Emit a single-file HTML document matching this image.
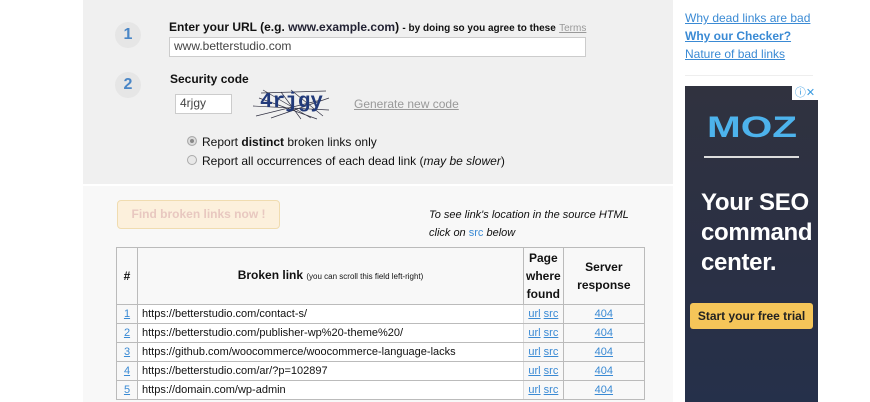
<!DOCTYPE html>
<html style="width:870px;height:402px;overflow:hidden"><head><meta charset="utf-8"><style>
*{box-sizing:border-box;margin:0;padding:0}
body{width:870px;height:402px;overflow:hidden;background:#fff;font-family:"Liberation Sans",Arial,sans-serif;position:relative;color:#111}
.top{position:absolute;left:83px;top:0;width:590px;height:184px;background:#f0f0f0}
.bot{position:absolute;left:83px;top:186px;width:590px;height:216px;background:#f8f8f8}
.circ{position:absolute;width:26px;height:26px;border-radius:50%;background:#e6e6e6;color:#4a86c6;font-size:16px;text-align:center;line-height:26px;font-weight:bold}
.abs{position:absolute;white-space:nowrap}
a{color:#3a8ad4;text-decoration:underline}
.inp{position:absolute;background:#fff;border:1px solid #ccc;font-size:12px;color:#444;padding-left:4px;line-height:17px}
.radio{position:absolute;width:10px;height:10px;border-radius:50%;border:1px solid #aaa;background:#e8e8e8}
table{position:absolute;left:116px;top:247px;width:529px;border-collapse:collapse;background:#f8f8f8;font-size:11px}
td,th{border:1px solid #bbb;height:19px;padding:0 2px}
th{font-weight:bold;font-size:12px;line-height:18px}
td.n{text-align:center}
td.l{background:#fff;padding-left:4px;border-right:1px solid #ddd}
td.c{text-align:center}
.ad{position:absolute;left:685px;top:86px;width:133px;height:316px;background:linear-gradient(#30323f,#2a3045 60%,#25304a);overflow:hidden}
</style></head><body>
<div class="top"></div><div class="bot"></div>
<div class="circ" style="left:115px;top:22px">1</div>
<div class="circ" style="left:115px;top:72px">2</div>
<div class="abs" style="left:169px;top:20px;font-size:12px;font-weight:bold">Enter your URL (e.g. <span style="color:#223">www.example.com</span>) <span style="font-size:10px">- by doing so you agree to these</span> <a style="font-size:10px;font-weight:normal;color:#999">Terms</a></div>
<div class="inp" style="left:169px;top:37px;width:417px;height:20px">www.betterstudio.com</div>
<div class="abs" style="left:170px;top:72px;font-size:12px;font-weight:bold">Security code</div>
<div class="inp" style="left:175px;top:94px;width:57px;height:20px">4rjgy</div>
<div class="abs" style="left:251px;top:88px;width:80px;height:33px;color:#223a7a;font-size:21px;font-weight:bold;font-family:'Liberation Mono',monospace;overflow:hidden">
<svg width="80" height="33" style="position:absolute;left:0;top:0" stroke="#334" stroke-width="0.7"><path d="M10 5L75 3M5 28L70 12M12 2L60 30M20 30L78 10M30 4L50 31M2 18L78 22M40 2L72 28M8 10L66 31"/></svg><span style="position:relative;left:9px;top:3px">4rjgy</span></div>
<a class="abs" style="left:354px;top:97px;font-size:12px;color:#999">Generate new code</a>
<div class="radio" style="left:187px;top:136px;background:#888;box-shadow:inset 0 0 0 2px #ddd"></div>
<div class="abs" style="left:202px;top:135px;font-size:12px">Report <b>distinct</b> broken links only</div>
<div class="radio" style="left:187px;top:155px"></div>
<div class="abs" style="left:202px;top:154px;font-size:12px">Report all occurrences of each dead link (<i>may be slower</i>)</div>
<div class="abs" style="left:117px;top:200px;width:163px;height:29px;border:1px solid #f0dcb0;background:#fcf0dc;border-radius:4px;color:#e8c8c0;font-weight:bold;font-size:12px;text-align:center;line-height:27px">Find broken links now !</div>
<div class="abs" style="left:429px;top:206px;font-size:11px;font-style:italic;line-height:18px">To see link's location in the source HTML<br>click on <span style="color:#3a8ad4;font-style:normal">src</span> below</div>
<table>
<tr><th style="width:21px;height:57px">#</th><th style="width:386px">Broken link <span style="font-size:8px;font-weight:normal">(you can scroll this field left-right)</span></th><th style="width:39px">Page where found</th><th>Server response</th></tr>
<tr><td class="n"><a>1</a></td><td class="l">https://betterstudio.com/contact-s/</td><td class="c"><a>url</a> <a>src</a></td><td class="c"><a>404</a></td></tr>
<tr><td class="n"><a>2</a></td><td class="l">https://betterstudio.com/publisher-wp%20-theme%20/</td><td class="c"><a>url</a> <a>src</a></td><td class="c"><a>404</a></td></tr>
<tr><td class="n"><a>3</a></td><td class="l">https://github.com/woocommerce/woocommerce-language-lacks</td><td class="c"><a>url</a> <a>src</a></td><td class="c"><a>404</a></td></tr>
<tr><td class="n"><a>4</a></td><td class="l">https://betterstudio.com/ar/?p=102897</td><td class="c"><a>url</a> <a>src</a></td><td class="c"><a>404</a></td></tr>
<tr><td class="n"><a>5</a></td><td class="l">https://domain.com/wp-admin</td><td class="c"><a>url</a> <a>src</a></td><td class="c"><a>404</a></td></tr>
</table>
<a class="abs" style="left:685px;top:11px;font-size:12px">Why dead links are bad</a>
<a class="abs" style="left:685px;top:29px;font-size:12px;font-weight:bold">Why our Checker?</a>
<a class="abs" style="left:685px;top:47px;font-size:12px">Nature of bad links</a>
<div class="abs" style="left:685px;top:75px;width:128px;height:1px;background:#eee"></div>
<div class="ad">
<div class="abs" style="right:0;top:0;width:26px;height:14px;background:#fff;color:#3a9be0;font-size:11px;line-height:14px;text-align:center">ⓘ✕</div>
<div class="abs" style="left:22px;top:25px;font-size:30px;font-weight:bold;color:#4db3ec;transform:scaleX(1.35);transform-origin:left">MOZ</div>
<div class="abs" style="left:19px;top:70px;width:95px;height:2px;background:#ddd"></div>
<div class="abs" style="left:16px;top:102px;font-size:24px;color:#fff;line-height:30px;font-weight:bold;letter-spacing:-0.3px">Your SEO<br>command<br>center.</div>
<div class="abs" style="left:5px;top:217px;width:123px;height:26px;background:#f5c559;border-radius:3px;color:#222;font-size:12px;font-weight:bold;text-align:center;line-height:26px">Start your free trial</div>
</div>
</body></html>
